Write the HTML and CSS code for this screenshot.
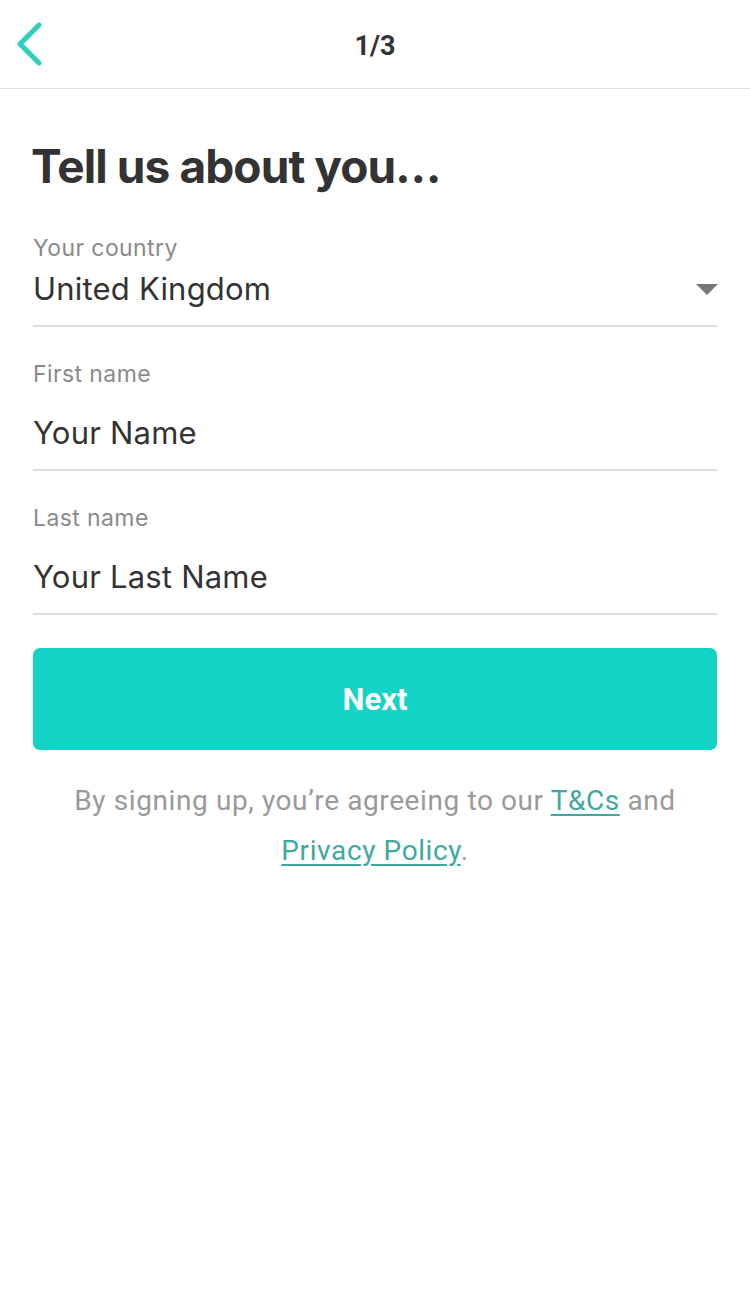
FILE: index.html
```html
<!DOCTYPE html>
<html lang="en">
<head>
<meta charset="utf-8">
<title>Tell us about you</title>
<link rel="stylesheet" href="styles.css">
</head>
<body>
<header class="topbar">
  <a class="back" href="#" aria-label="Back">
    <svg width="34" height="48" viewBox="0 0 34 48"><path d="M29 4 L10 23 L29 42" fill="none" stroke="#2ccfc0" stroke-width="5" stroke-linecap="round" stroke-linejoin="round"/></svg>
  </a>
  <div class="step">1/3</div>
</header>
<main class="content">
  <h1 class="title">Tell us about you…</h1>
  <div class="field field-select">
    <div class="label">Your country</div>
    <div class="value-row">
      <span class="value">United Kingdom</span>
      <span class="caret"></span>
    </div>
  </div>
  <div class="field">
    <div class="label">First name</div>
    <div class="value">Your Name</div>
  </div>
  <div class="field">
    <div class="label">Last name</div>
    <div class="value">Your Last Name</div>
  </div>
  <button class="next">Next</button>
  <p class="legal">By signing up, you’re agreeing to our <a href="#">T&amp;Cs</a> and<br><a href="#">Privacy Policy</a>.</p>
</main>
</body>
</html>
```
FILE: styles.css
```css
* { box-sizing: border-box; }
html, body { margin: 0; padding: 0; background: #fff; }
body { font-family: Inter, "Noto Sans", sans-serif; color: #333; }

.topbar {
  height: 89px;
  border-bottom: 1px solid #dedede;
  display: flex;
  align-items: center;
  justify-content: center;
  position: relative;
}
.back {
  position: absolute;
  left: 10px;
  top: 21px;
  display: block;
  line-height: 0;
}
.step {
  font-family: Roboto, "Liberation Sans", sans-serif;
  font-weight: 700;
  font-size: 27px;
  color: #333;
  margin-top: 4px;
}

.content { padding: 0 33px; }

.title {
  margin: 49px 0 0 -2px;
  font-size: 46px;
  line-height: 56px;
  font-weight: 700;
  letter-spacing: -0.9px;
  color: #333;
}

.field {
  border-bottom: 2px solid #dcdcdc;
  padding-bottom: 16px;
  margin-top: 33px;
}
.field-select { margin-top: 40px; }
.label {
  font-size: 23px;
  line-height: 28px;
  letter-spacing: 0.4px;
  color: #8a8a8a;
}
.value {
  font-size: 31px;
  line-height: 40px;
  letter-spacing: 0.2px;
  color: #333;
  margin-top: 25px;
}
.field-select .value-row {
  display: flex;
  align-items: center;
  justify-content: space-between;
  margin-top: 7px;
}
.field-select .value { margin-top: 0; }
.caret {
  width: 0;
  height: 0;
  border-left: 11px solid transparent;
  border-right: 11px solid transparent;
  border-top: 11px solid #777;
  margin-right: -1px;
}

.next {
  display: block;
  width: 100%;
  height: 102px;
  margin-top: 33px;
  border: 0;
  border-radius: 7px;
  background: #12d3c6;
  color: #fff;
  font-family: Roboto, "Liberation Sans", sans-serif;
  font-weight: 700;
  font-size: 31px;
  cursor: pointer;
}

.legal {
  margin: 26px 0 0;
  text-align: center;
  font-family: Roboto, "Liberation Sans", sans-serif;
  font-size: 28px;
  line-height: 50px;
  letter-spacing: 0.6px;
  color: #9a9a9a;
}
.legal a { color: #3fa9a0; text-decoration: underline; text-underline-offset: 4px; }
```
